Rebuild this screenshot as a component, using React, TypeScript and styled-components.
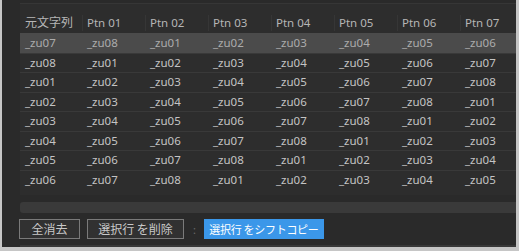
import { createGlobalStyle } from 'styled-components'
import styled from 'styled-components'

type RowProps = {
  selected?: boolean
}

type ButtonProps = {
  primary?: boolean
  width: number
}

const GlobalStyle = createGlobalStyle`
  html, body {
    margin: 0;
    padding: 0;
    background: #c6c6c6;
  }
`

const Frame = styled.div`
  width: 519px;
  height: 251px;
  box-sizing: border-box;
  padding: 0 3px 4px 2px;
  background: #c6c6c6;
`

const Panel = styled.div`
  height: 100%;
  background: #2a2a2a;
  display: flex;
  flex-direction: column;
  font-family: 'Noto Sans', 'Noto Sans CJK JP', sans-serif;
  overflow: hidden;
`

const TableArea = styled.div`
  margin: 3px 0 0 18px;
  border-top: 1px solid #363636;
  background: #2d2d2d;
  height: 194px;
  display: flex;
  flex-direction: column;
  overflow: hidden;
`

const HeaderRow = styled.div`
  display: grid;
  grid-template-columns: 62px repeat(7, 63px);
  height: 20px;
  margin-top: 9px;
  flex-shrink: 0;
`

const HeaderCell = styled.div`
  position: relative;
  padding-left: 5px;
  font-size: 11.5px;
  line-height: 20px;
  color: #b6b6b6;
  white-space: nowrap;

  &:first-child {
    font-size: 12px;
  }

  &:not(:first-child)::before {
    content: '';
    position: absolute;
    left: 0;
    top: 2px;
    bottom: 2px;
    width: 1px;
    background: #363636;
  }
`

const Row = styled.div<RowProps>`
  display: grid;
  grid-template-columns: 62px repeat(7, 63px);
  height: 19.5px;
  flex-shrink: 0;
  box-sizing: border-box;
  border-top: 1px solid ${p => (p.selected ? '#4b4b4b' : '#393939')};
  background: ${p => (p.selected ? '#4b4b4b' : 'transparent')};
  color: ${p => (p.selected ? '#acacac' : '#c4c4c4')};
`

const Cell = styled.div`
  padding-left: 5px;
  font-size: 11.5px;
  line-height: 18px;
  white-space: nowrap;
`

const ScrollTrack = styled.div`
  margin: 7px 0 0 18px;
  height: 11px;
  background: #3a3a3a;
  border-radius: 3px 0 0 3px;
  flex-shrink: 0;
`

const Toolbar = styled.div`
  display: flex;
  align-items: center;
  margin: 6px 0 0 17px;
  height: 20px;
`

const Button = styled.button<ButtonProps>`
  width: ${p => p.width}px;
  height: 20px;
  box-sizing: border-box;
  padding: 0;
  margin-right: 7px;
  font-family: 'Noto Sans CJK JP', sans-serif;
  font-size: ${p => (p.primary ? '11px' : '12px')};
  letter-spacing: ${p => (p.primary ? '-0.3px' : '0')};
  line-height: 18px;
  white-space: nowrap;
  border: 1px solid ${p => (p.primary ? '#3b97e9' : '#7a7a7a')};
  background: ${p => (p.primary ? '#3b97e9' : '#313131')};
  color: ${p => (p.primary ? '#ffffff' : '#c8c8c8')};
  border-radius: 0;
  cursor: pointer;
`

const Colon = styled.span`
  color: #6a6a6a;
  font-size: 11px;
  padding: 0 8px 0 2px;
`

const BottomLine = styled.div`
  margin: 6px 0 0 18px;
  height: 2px;
  background: #383838;
`

const headers = ['元文字列', 'Ptn 01', 'Ptn 02', 'Ptn 03', 'Ptn 04', 'Ptn 05', 'Ptn 06', 'Ptn 07']

const zu = (n: number) => `_zu0${((n % 8) + 8) % 8 + 1}`

const rows = [6, 7, 0, 1, 2, 3, 4, 5].map(start =>
  Array.from({ length: 8 }, (_, i) => zu(start + i))
)

export default function App () {
  return (
    <>
      <GlobalStyle />
      <Frame>
        <Panel>
          <TableArea>
            <HeaderRow>
              {headers.map(h => (
                <HeaderCell key={h}>{h}</HeaderCell>
              ))}
            </HeaderRow>
            {rows.map((row, r) => (
              <Row key={r} selected={r === 0}>
                {row.map((v, c) => (
                  <Cell key={c}>{v}</Cell>
                ))}
              </Row>
            ))}
          </TableArea>
          <ScrollTrack />
          <Toolbar>
            <Button width={61}>全消去</Button>
            <Button width={97}>選択行 を削除</Button>
            <Colon>:</Colon>
            <Button primary width={120}>選択行 をシフトコピー</Button>
          </Toolbar>
          <BottomLine />
        </Panel>
      </Frame>
    </>
  )
}
